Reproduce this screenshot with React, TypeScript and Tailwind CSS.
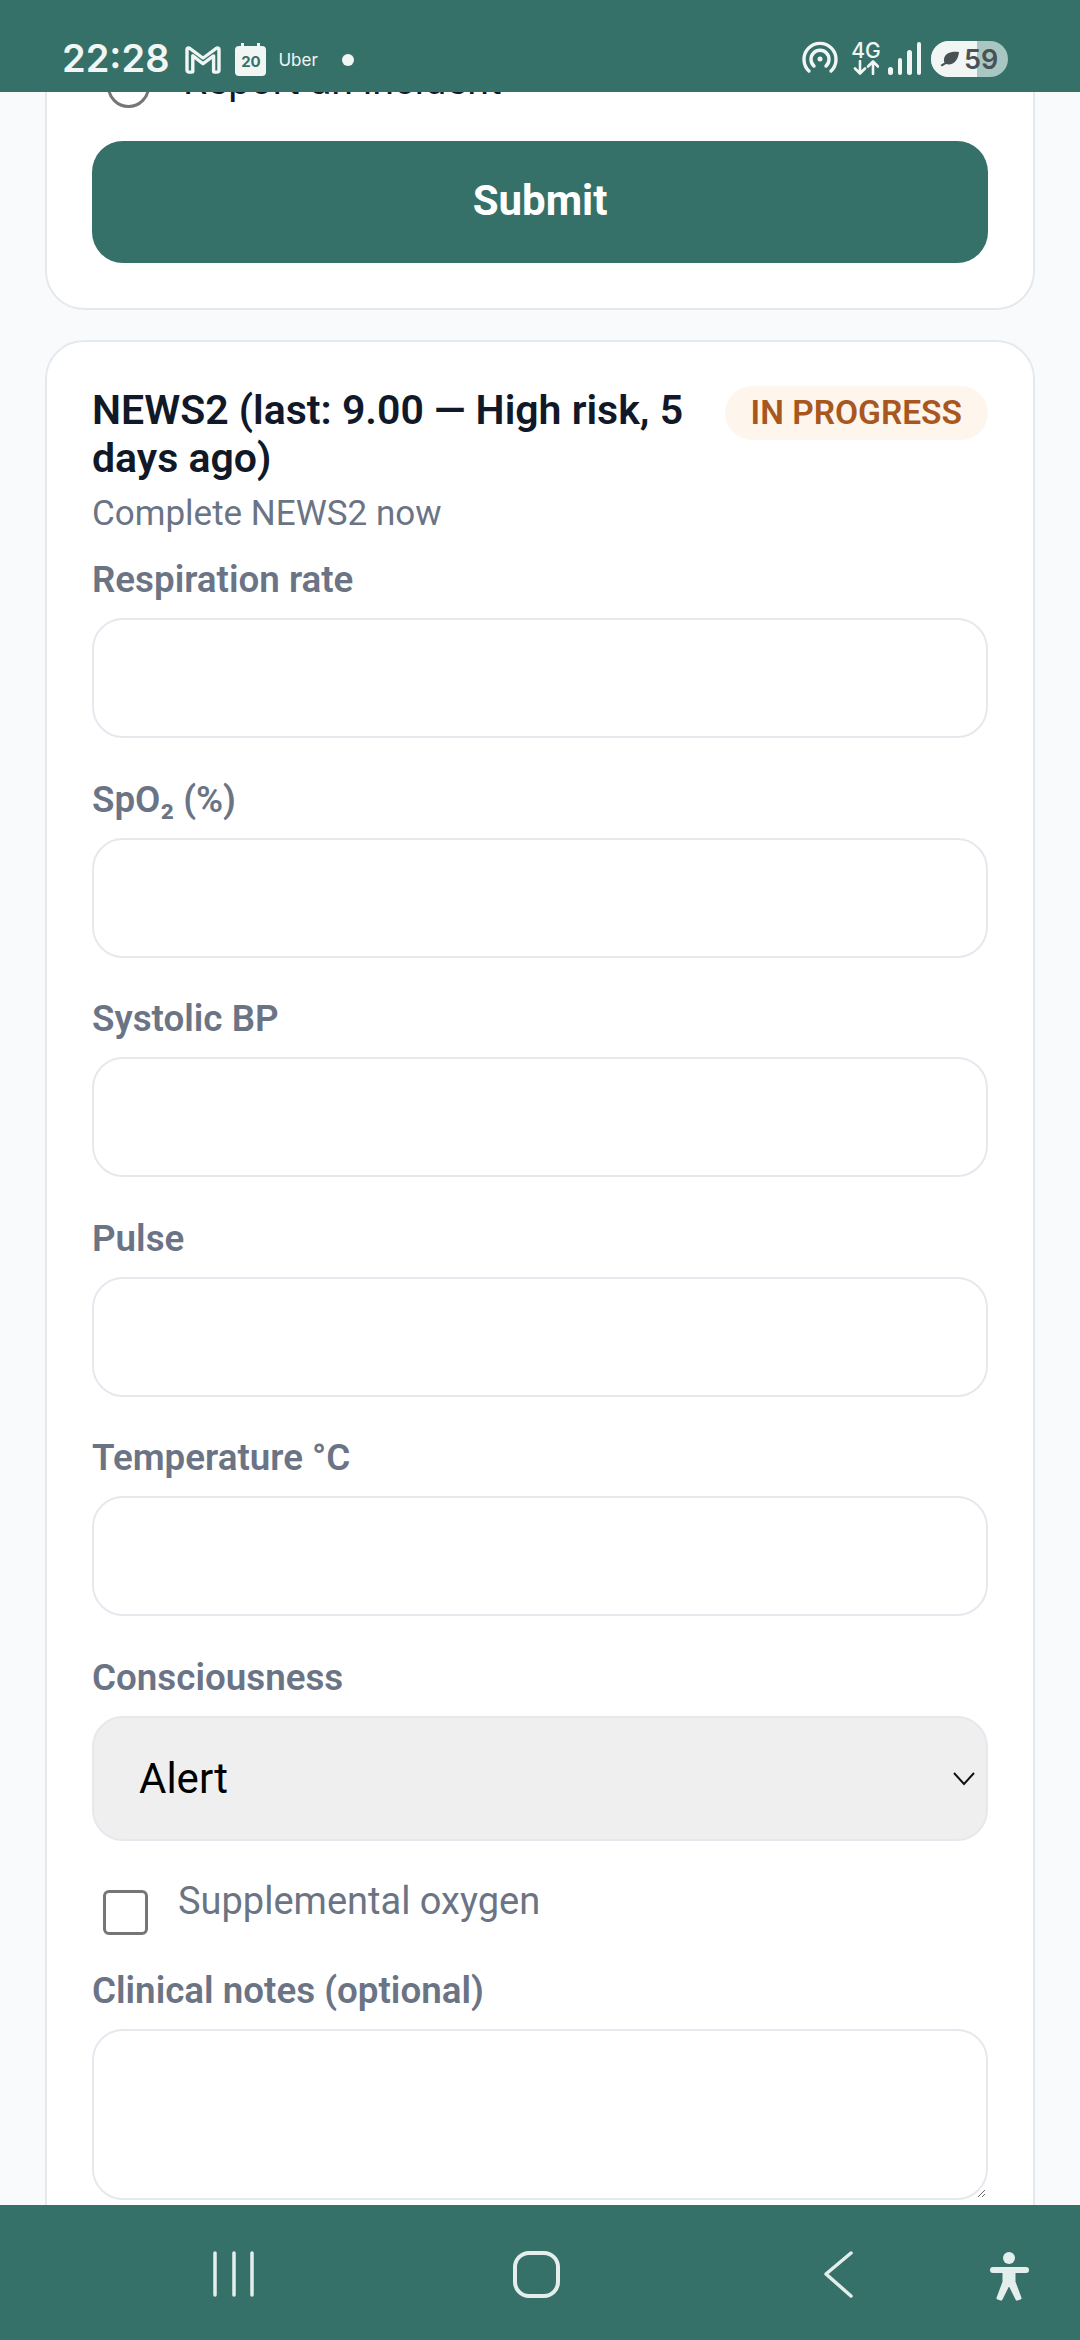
const teal = "bg-[#367169]";

function Field({ label, children }: { label: React.ReactNode; children?: React.ReactNode }) {
  return (
    <div className="flex flex-col">
      <label className="text-[36.75px] leading-[48px] font-semibold text-[#6b7485] h-[59px] mb-[3px]">{label}</label>
      {children ?? <input className="w-full h-[120px] bg-white border-2 border-[#e5e9ee] rounded-[31px] mb-[37.6px]" />}
    </div>
  );
}

function StatusBar() {
  return (
    <div className={`relative z-10 h-[92px] shrink-0 ${teal} flex items-end pb-[15px] pl-[62px] pr-[72px] text-[#f1f6f5]`}>
      <span className="text-[38px] leading-[44px] font-semibold -mb-[3px] font-['Inter',sans-serif]">22:28</span>
      <svg width="36" height="28" viewBox="0 0 36 30" preserveAspectRatio="none" className="ml-[16px] mb-[3px]" fill="none" stroke="#f1f6f5" strokeWidth="3.4" strokeLinejoin="round">
        <path d="M2 3.5 a1.6 1.6 0 0 1 2.6-1.2 L18 13 L31.400 2.300 a1.600 1.600 0 0 1 2.600 1.200 V26 a2 2 0 0 1-2 2 h-2.400 a1 1 0 0 1-1-1 V10.500 L18 19 L7.800 10.500 V27 a1 1 0 0 1-1 1 H4 a2 2 0 0 1-2-2 Z" />
      </svg>
      <div className="relative ml-[14px] mb-[1px] w-[31px] h-[30px] bg-[#f1f6f5] rounded-[4px] flex items-center justify-center text-[15px] font-bold leading-none text-[#367169] font-['Inter',sans-serif]">
        20
        <span className="absolute -top-[3px] left-[6px] w-[3px] h-[4px] bg-[#f1f6f5]" />
        <span className="absolute -top-[3px] right-[6px] w-[3px] h-[4px] bg-[#f1f6f5]" />
      </div>
      <span className="ml-[12px] mb-[6px] text-[17px] leading-[22px] font-['Inter',sans-serif]">Uber</span>
      <span className="ml-[24px] mb-[11px] w-[12px] h-[12px] rounded-full bg-[#f1f6f5]" />
      <div className="flex-1" />
      <svg width="36" height="34" viewBox="0 0 36 34" fill="none" stroke="#f1f6f5" strokeWidth="3.4" strokeLinecap="round" className="mb-[3px]">
        <path d="M7 31 A16 16 0 1 1 29 31" />
        <path d="M12 26 A9 9 0 1 1 24 26" />
        <circle cx="18" cy="19" r="2.500" fill="#f1f6f5" stroke="none" />
      </svg>
      <div className="ml-[12px] mb-[2px] w-[32px] flex flex-col items-center">
        <span className="text-[21px] leading-[19px] font-medium font-['Inter',sans-serif]">4G</span>
        <svg width="26" height="15" viewBox="0 0 26 15" fill="none" stroke="#f1f6f5" strokeWidth="2.600" strokeLinecap="round" strokeLinejoin="round">
          <path d="M7 1 V13 M2 8.500 L7 13.500 L12 8.500 M20 14 V2 M15 6.500 L20 1.500 L25 6.500" />
        </svg>
      </div>
      <div className="ml-[6px] mb-[2px] flex items-end gap-[5px] h-[33px]">
        <span className="w-[4.500px] h-[8px] rounded-full bg-[#f1f6f5]" />
        <span className="w-[4.500px] h-[17px] rounded-full bg-[#f1f6f5]" />
        <span className="w-[4.500px] h-[25px] rounded-full bg-[#f1f6f5]" />
        <span className="w-[4.500px] h-[33px] rounded-full bg-[#f1f6f5]" />
      </div>
      <div className="relative ml-[10px] w-[77px] h-[36px] rounded-full overflow-hidden bg-[#a8c6c2] flex items-center">
        <span className="absolute left-0 top-0 bottom-0 w-[46px] bg-[#f1f6f5]" />
        <svg width="20" height="16" viewBox="0 0 20 16" className="relative ml-[9px]" fill="#4a5155">
          <path d="M19 1 C11 0 5 2 4 8 C3.800 9.500 4 10.500 4.500 11.500 L0.500 14 L2 15.500 L6 13 C13 15 18 10 19 1 Z" />
        </svg>
        <span className="relative ml-[4px] text-[27px] leading-none font-semibold text-[#4a5155] font-['Inter',sans-serif]">59</span>
      </div>
    </div>
  );
}

function NavBar() {
  return (
    <div className={`relative z-10 h-[135px] shrink-0 ${teal}`}>
      <svg width="1080" height="135" viewBox="0 0 1080 135" fill="none" stroke="#e4eeec" strokeLinecap="round" strokeLinejoin="round">
        <path d="M215 48 V90 M234 48 V90 M252 48 V90" strokeWidth="3.500" />
        <rect x="515" y="48" width="43" height="43" rx="14" strokeWidth="4" />
        <path d="M851 48 L826 69 L851 91" strokeWidth="3.500" />
        <circle cx="1009" cy="53" r="6" fill="#e4eeec" stroke="none" />
        <path d="M993 65 H1026" strokeWidth="6" />
        <path d="M1004 66 H1014 V77 L1020 93 L1017 94 L1009 78 L1001 94 L998 93 L1004 77 Z" strokeWidth="3" fill="#e4eeec" />
      </svg>
    </div>
  );
}

export default function App() {
  return (
    <div className="w-[1080px] h-[2340px] flex flex-col overflow-hidden bg-[#f8fafb] font-['Roboto',sans-serif]">
      <StatusBar />
      <main className="flex-1 min-h-0 overflow-hidden px-[45px]">
        <section className="-mt-[60px] h-[278px] bg-white border-2 border-[#e5e9ee] rounded-[39px] px-[45px] pt-[30px]">
          <div className="flex items-start h-[60px]">
            <span className="ml-[15px] mt-[1px] w-[43px] h-[43px] rounded-full border-[3px] border-[#767676]" />
            <span className="ml-[33px] -mt-[7px] text-[39.4px] leading-[48px] text-[#111827]">Report an incident</span>
          </div>
          <button className="mt-[17px] pb-[3px] w-full h-[122px] bg-[#367169] rounded-[31px] text-white text-[42px] font-bold">Submit</button>
        </section>
        <section className="mt-[30px] pb-[60px] bg-white border-2 border-[#e5e9ee] rounded-[39px] px-[45px] pt-[44px]">
          <div className="flex items-start justify-between gap-[30px]">
            <h2 className="text-[41px] leading-[48px] font-semibold text-[#111827]">NEWS2 (last: 9.00 — High risk, 5 days ago)</h2>
            <span className="shrink-0 h-[54px] px-[26px] rounded-full bg-[#fef6ec] text-[#a8581f] text-[33.5px] leading-[54px] font-semibold">IN PROGRESS</span>
          </div>
          <p className="mt-[8px] text-[35px] leading-[48px] text-[#6b7485]">Complete NEWS2 now</p>
          <div className="mt-[18px]">
            <Field label="Respiration rate" />
            <Field label={<>SpO₂ (%)</>} />
            <Field label="Systolic BP" />
            <Field label="Pulse" />
            <Field label="Temperature °C" />
            <Field label="Consciousness">
              <div className="relative mb-[29px]">
                <select className="w-full h-[125px] appearance-none bg-[#efefef] border-2 border-[#e5e9ee] rounded-[31px] pl-[45px] text-[42px] text-black">
                  <option>Alert</option>
                </select>
                <svg width="24" height="16" viewBox="0 0 24 16" fill="none" stroke="#111" strokeWidth="2" className="absolute right-[12px] top-[55px]">
                  <path d="M2 2 L12 13 L22 2" />
                </svg>
              </div>
            </Field>
            <div className="flex items-start h-[97px]">
              <input type="checkbox" className="appearance-none ml-[11px] mt-[20px] w-[45px] h-[45px] rounded-[6px] border-[3px] border-[#767676] bg-white" />
              <span className="ml-[30px] mt-[7px] text-[38px] leading-[48px] text-[#6b7485]">Supplemental oxygen</span>
            </div>
            <Field label="Clinical notes (optional)">
              <textarea className="w-full h-[171px] block bg-white border-2 border-[#e5e9ee] rounded-[31px]" />
            </Field>
          </div>
        </section>
      </main>
      <NavBar />
    </div>
  );
}
